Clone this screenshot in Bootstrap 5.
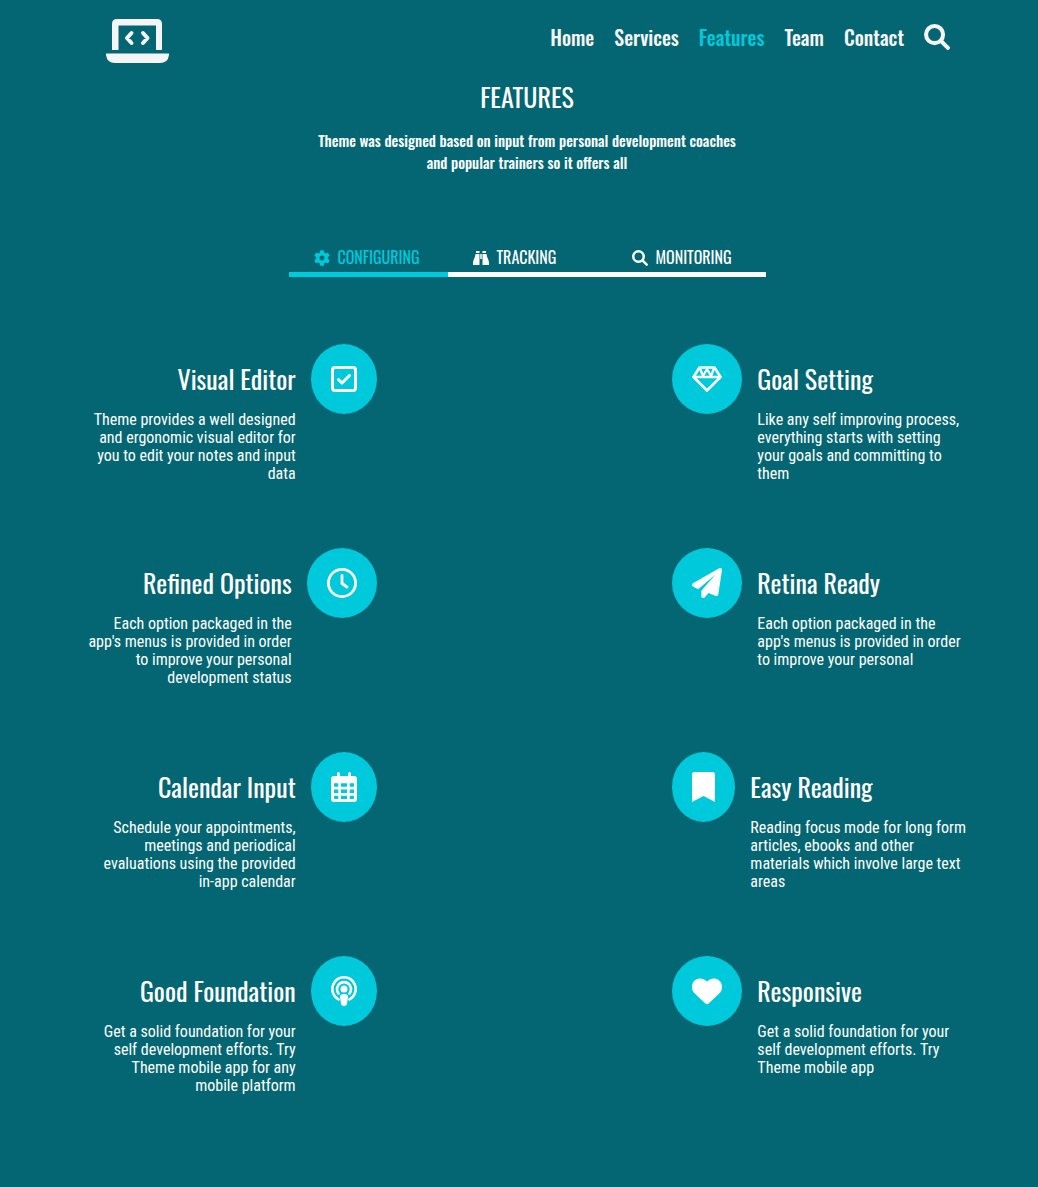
<!DOCTYPE html>
<html lang="en">
<head>
<meta charset="utf-8">
<meta name="viewport" content="width=device-width, initial-scale=1">
<title>Features</title>
<link href="https://cdn.jsdelivr.net/npm/bootstrap@5.3.0/dist/css/bootstrap.min.css" rel="stylesheet">
<style>
:root { --accent: #00c9db; --display: Oswald, "Roboto Condensed", "Liberation Sans Narrow", "Liberation Sans", sans-serif; }
body { background: #046672; color: #fff; font-family: "Roboto Condensed", "Liberation Sans Narrow", "Liberation Sans", sans-serif; }
svg { display: block; fill: currentColor; flex: none; }
.line-art { fill: none; stroke: currentColor; stroke-linecap: round; stroke-linejoin: round; }
.site-bar { padding: 19px 88px 0 106px; color: #f5f5f5; }
.site-nav { gap: 20px; padding-top: 3px; }
.site-bar .nav-link { font: 500 20px/30px var(--display); color: #f5f5f5; padding: 0; }
.site-bar .nav-link.active { color: var(--accent); }
.search-btn { background: none; border: 0; padding: 0; color: inherit; }
.page-body { padding: 18px 56px 0 72px; }
.intro-title { font: 400 26px/32px var(--display); }
.intro-text { font: 500 15px/22px var(--display); }
.feature-tabs { width: 477px; margin-top: 71px; }
.feature-tabs button { flex: 1; background: none; border: 0; border-bottom: 5px solid #fff; color: #fff; padding: 0 0 2px 25px; font: 400 16px/26px var(--display); gap: 8px; }
.feature-tabs svg { margin-top: 2px; }
.feature-tabs button.active { color: var(--accent); border-color: var(--accent); }
.feature-grid { display: grid; grid-template-columns: 305fr 296fr 310fr; row-gap: 65px; margin-top: 67px; padding-bottom: 88px; }
.feature-item { gap: 15px; }
.feature-item.on-left { grid-column: 1; flex-direction: row-reverse; text-align: right; }
.feature-item.on-right { grid-column: 3; }
.disc { background: var(--accent); border-radius: 50%; padding: 20px; }
.feature-item h3 { font: 400 26px/34px var(--display); margin: 18px 0 15px; white-space: nowrap; }
.feature-item p { font-size: 16px; line-height: 18px; margin: 0; white-space: nowrap; }
</style>
<script src="https://cdn.jsdelivr.net/npm/bootstrap@5.3.0/dist/js/bootstrap.bundle.min.js"></script>
</head>
<body>
<header class="site-bar d-flex justify-content-between align-items-start">
  <a href="#" class="text-reset" aria-label="Home page">
    <svg width="63" height="44" viewBox="0 0 63 44"><path d="M6 31V5Q6 0 11 0H51Q56 0 56 5V31H50V6.500H12.500V31Z"/><path d="M0 34.500H63V36Q62 44 54 44H9Q1 44 0 36Z"/><path class="line-art" stroke-width="4" d="M25.500 14l-4.500 5 4.500 5M37 14l4.500 5-4.500 5"/></svg>
  </a>
  <nav class="site-nav d-flex align-items-center" aria-label="Main">
    <a class="nav-link" href="#">Home</a>
    <a class="nav-link" href="#">Services</a>
    <a class="nav-link active" href="#" aria-current="page">Features</a>
    <a class="nav-link" href="#">Team</a>
    <a class="nav-link" href="#">Contact</a>
    <button class="search-btn" type="button" aria-label="Search"><svg class="line-art" width="26" height="26" viewBox="0 0 512 512" stroke-width="80"><circle cx="208" cy="208" r="168"/><path d="M335 335L470 470"/></svg></button>
  </nav>
</header>

<main class="page-body">
  <section class="text-center">
    <h1 class="intro-title mb-0">FEATURES</h1>
    <p class="intro-text mb-0 mt-3">Theme was designed based on input from personal development coaches<br>and popular trainers so it offers all</p>
  </section>

  <div class="feature-tabs d-flex mx-auto" role="tablist">
    <button type="button" role="tab" aria-selected="true" class="active d-flex align-items-center"><svg width="16" height="16" viewBox="0 0 32 32"><path fill-rule="evenodd" d="M12.500 1Q16-.500 19.500 1L20.500 5.500 23 7 27.500 5.500Q30.500 8 31 11.500L27.700 14.500V17.500L31 20.500Q30.500 24 27.500 26.500L23 25 20.500 26.500 19.500 31Q16 32.500 12.500 31L11.500 26.500 9 25 4.500 26.500Q1.500 24 1 20.500L4.300 17.500V14.500L1 11.500Q1.500 8 4.500 5.500L9 7 11.500 5.500ZM16 11a5 5 0 1 0 0 10a5 5 0 1 0 0-10Z"/></svg><span>CONFIGURING</span></button>
    <button type="button" role="tab" aria-selected="false" class="d-flex align-items-center"><svg width="16" height="16" viewBox="0 0 32 32"><path d="M6 2h7v4H6zM19 2h7v4h-7zM5 8h8v21q0 1-1 1H1q-1 0-1-1v-3Q0 22 2 18Q4 14 5 8ZM27 8h-8v21q0 1 1 1h11q1 0 1-1v-3q0-4-2-8q-2-4-3-10ZM14.500 8h3v10h-3z"/></svg><span>TRACKING</span></button>
    <button type="button" role="tab" aria-selected="false" class="d-flex align-items-center"><svg class="line-art" width="16" height="16" viewBox="0 0 512 512" stroke-width="80"><circle cx="208" cy="208" r="168"/><path d="M335 335L470 470"/></svg><span>MONITORING</span></button>
  </div>

  <section class="feature-grid">
    <article class="feature-item on-left d-flex align-items-start">
      <div class="disc"><svg class="line-art" width="26" height="30" viewBox="0 0 26 30"><rect x="1.500" y="3.500" width="23" height="23" rx="2.500" stroke-width="3"/><path stroke-width="3" d="M7.500 15.500l3.500 3.500 7.500-7.500"/></svg></div>
      <div><h3>Visual Editor</h3><p>Theme provides a well designed<br>and ergonomic visual editor for<br>you to edit your notes and input<br>data</p></div>
    </article>
    <article class="feature-item on-right d-flex align-items-start">
      <div class="disc"><svg class="line-art" width="30" height="30" viewBox="0 0 30 30"><path stroke-width="2.600" d="M7.500 3.500h15l6 9.500L15 26.500 1.500 13ZM2 13h26"/><path stroke-width="2.200" d="M8 4.500l3 7.500 4-7 4 7 3-7.500"/></svg></div>
      <div><h3>Goal Setting</h3><p>Like any self improving process,<br>everything starts with setting<br>your goals and committing to<br>them</p></div>
    </article>
    <article class="feature-item on-left d-flex align-items-start">
      <div class="disc"><svg class="line-art" width="30" height="30" viewBox="0 0 30 30" stroke-width="2.800"><circle cx="15" cy="15" r="13.600"/><path d="M15 7.500V15.500l5 3.500"/></svg></div>
      <div><h3>Refined Options</h3><p>Each option packaged in the<br>app's menus is provided in order<br>to improve your personal<br>development status</p></div>
    </article>
    <article class="feature-item on-right d-flex align-items-start">
      <div class="disc"><svg width="30" height="30" viewBox="0 0 512 512"><path d="M498.100 5.600c10.100 7 15.400 19.100 13.500 31.200l-64 416c-1.500 9.700-7.400 18.200-16 23s-18.900 5.400-28 1.600L284 427.700l-68.500 74.100c-8.900 9.700-22.900 12.900-35.200 8.100S160 493.200 160 480V396.400c0-4 1.500-7.800 4.200-10.700L400 110 106 360.800 17.700 316.600C7.100 311.300.300 300.700 0 288.900s5.900-22.800 16.100-28.700l448-256c10.700-6.100 23.900-5.500 34 1.400z"/></svg></div>
      <div><h3>Retina Ready</h3><p>Each option packaged in the<br>app's menus is provided in order<br>to improve your personal</p></div>
    </article>
    <article class="feature-item on-left d-flex align-items-start">
      <div class="disc"><svg width="26" height="30" viewBox="0 0 26 30"><path fill-rule="evenodd" d="M6 1.500q0-1.500 1.400-1.500t1.400 1.500V4h8.400V1.500q0-1.500 1.400-1.500T20 1.500V4h3q3 0 3 3v20q0 3-3 3H3q-3 0-3-3V7q0-3 3-3h3ZM3 11.300v3.400h4.300v-3.400ZM10 11.300v3.400h6v-3.400ZM18.700 11.300v3.400H23v-3.400ZM3 17.500v3.400h4.300v-3.400ZM10 17.500v3.400h6v-3.400ZM18.700 17.500v3.400H23v-3.400ZM3 23.700V26q0 1 1 1h3.300v-3.300ZM10 23.700V27h6v-3.300ZM18.700 23.700V27H22q1 0 1-1v-2.300Z"/></svg></div>
      <div><h3>Calendar Input</h3><p>Schedule your appointments,<br>meetings and periodical<br>evaluations using the provided<br>in-app calendar</p></div>
    </article>
    <article class="feature-item on-right d-flex align-items-start">
      <div class="disc"><svg width="23" height="30" viewBox="0 0 23 30"><path d="M0 2.500Q0 0 2.500 0h18Q23 0 23 2.500V30l-11.500-6L0 30Z"/></svg></div>
      <div><h3>Easy Reading</h3><p>Reading focus mode for long form<br>articles, ebooks and other<br>materials which involve large text<br>areas</p></div>
    </article>
    <article class="feature-item on-left d-flex align-items-start">
      <div class="disc"><svg width="26" height="30" viewBox="0 0 26 30"><g class="line-art" stroke-width="2.600"><path d="M7.500 23.300A11.700 11.700 0 1 1 18.500 23.300"/><path d="M7.500 17.500A7 7 0 1 1 18.500 17.500"/></g><circle cx="13" cy="13" r="3.500"/><path d="M13 18q4 0 4 3l-1 7q-.500 2-3 2t-3-2l-1-7q0-3 4-3Z"/></svg></div>
      <div><h3>Good Foundation</h3><p>Get a solid foundation for your<br>self development efforts. Try<br>Theme mobile app for any<br>mobile platform</p></div>
    </article>
    <article class="feature-item on-right d-flex align-items-start">
      <div class="disc"><svg width="30" height="30" viewBox="0 0 512 512"><path d="M47.600 300.400L228.300 469.100c7.500 7 17.400 10.900 27.700 10.900s20.200-3.900 27.700-10.900L464.400 300.400c30.400-28.300 47.600-68 47.600-109.500v-5.800c0-69.900-50.500-129.500-119.400-141C347 36.500 300.600 51.400 268 84L256 96 244 84c-32.600-32.600-79-47.500-124.600-39.900C50.500 55.600 0 115.200 0 185.100v5.800c0 41.500 17.200 81.200 47.600 109.500z"/></svg></div>
      <div><h3>Responsive</h3><p>Get a solid foundation for your<br>self development efforts. Try<br>Theme mobile app</p></div>
    </article>
  </section>
</main>
</body>
</html>
